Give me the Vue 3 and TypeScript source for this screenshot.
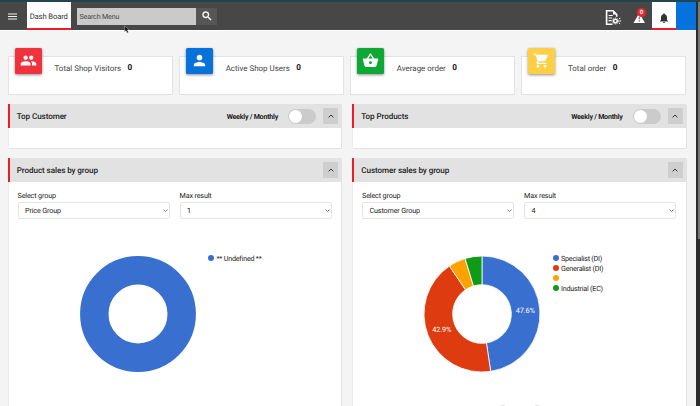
<template>
  <div class="screen">
    <div class="page">
      <header class="topbar">
        <button class="menu-btn" aria-label="menu">
          <svg viewBox="0 0 9 7" width="9" height="7">
            <path d="M0 1h9M0 3.5h9M0 6h9" stroke="#f2f2f2" stroke-width="1.1" />
          </svg>
        </button>
        <div class="tab"><span>Dash Board</span></div>
        <div class="search">
          <span class="search-input">Search Menu</span>
          <span class="search-btn">
            <svg viewBox="0 0 24 24" width="12" height="12">
              <path :d="icons.search" fill="#fff" stroke="#fff" stroke-width="0.8" />
            </svg>
          </span>
        </div>
        <div class="actions">
          <svg class="doc" viewBox="0 0 17 17" width="17" height="17" fill="none" stroke="#fff">
            <path d="M7.5 15.2H1.6V1.8h6.4l3.7 3.7v2.2" stroke-width="1.6" />
            <path d="M8 1.5v4h4z" fill="#fff" stroke="none" />
            <path d="M3.6 6.5h4.2M3.6 9h3.6M3.6 11.6h3" stroke-width="1.2" />
            <circle cx="10.4" cy="12" r="1.8" stroke-width="1.4" />
            <circle cx="10.4" cy="12" r="3" stroke-width="1" stroke-dasharray="1.1 1.1" />
            <path d="M14 9.9l1.4-.8M14.3 12h1.8M13.8 13.9l1.4.9" stroke-width="1" />
          </svg>
          <span class="alert">
            <svg viewBox="0 0 24 24" width="12.5" height="12.5">
              <path :d="icons.warning" fill="#fff" />
            </svg>
            <span class="badge">0</span>
          </span>
          <span class="bell">
            <svg viewBox="0 0 24 24" width="12" height="12">
              <path :d="icons.bell" fill="#333" />
            </svg>
          </span>
          <span class="profile"></span>
        </div>
      </header>

      <main class="content">
        <section class="stats">
          <div v-for="s in stats" :key="s.label" class="stat">
            <span class="stat-icon" :class="s.color">
              <svg viewBox="0 0 24 24" width="17" height="17">
                <path :d="s.icon" fill="#fff" />
              </svg>
            </span>
            <span class="stat-label">{{ s.label }}</span>
            <b class="stat-value">{{ s.value }}</b>
          </div>
        </section>

        <section class="columns">
          <div v-for="col in columns" :key="col.top" class="column">
            <div class="panel">
              <div class="panel-head">
                <h3>{{ col.top }}</h3>
                <span class="period">Weekly / Monthly</span>
                <span class="toggle" :class="{ on: col.monthly }" @click="col.monthly = !col.monthly"><i></i></span>
                <button class="collapse" @click="col.topOpen = !col.topOpen">
                  <svg viewBox="0 0 6 4" width="6" height="4"><path d="M.6 3.4L3 1l2.4 2.4" /></svg>
                </button>
              </div>
              <div v-if="col.topOpen" class="panel-empty"></div>
            </div>

            <div class="panel chart-panel">
              <div class="panel-head">
                <h3>{{ col.title }}</h3>
                <button class="collapse">
                  <svg viewBox="0 0 6 4" width="6" height="4"><path d="M.6 3.4L3 1l2.4 2.4" /></svg>
                </button>
              </div>
              <div class="filters">
                <div v-for="f in col.filters" :key="f.label" class="field">
                  <label>{{ f.label }}</label>
                  <div class="select">
                    <span>{{ f.value }}</span>
                    <svg viewBox="0 0 6 4" width="5" height="3.4"><path d="M.6 .6L3 3l2.4-2.4" /></svg>
                  </div>
                </div>
              </div>
              <div class="chart">
                <svg class="donut" viewBox="-58 -58 116 116" width="116" height="116">
                  <circle v-if="col.slices.length === 1" r="43.7" fill="none" :stroke="col.slices[0].color" stroke-width="28.4" />
                  <template v-else>
                    <path v-for="a in arcs(col.slices)" :key="a.color" :d="a.d" :fill="a.color" stroke="#fff" stroke-width="0.8" />
                    <text v-for="a in arcs(col.slices).filter((x) => x.text)" :key="a.text" :x="a.x" :y="a.y">{{ a.text }}</text>
                  </template>
                </svg>
                <ul class="legend">
                  <li v-for="s in col.slices" :key="s.color">
                    <i :style="{ background: s.color }"></i>{{ s.name }}
                  </li>
                </ul>
              </div>
              <div v-if="col.slices.length > 1" class="pager"><i></i><i></i></div>
            </div>
          </div>
        </section>
      </main>
    </div>
    <div class="scrollbar"><div class="thumb"></div></div>

    <svg class="pointer" viewBox="0 0 7 10" width="6" height="9">
      <path d="M.7 .7v7l1.7-1.5L3.6 9l1.5-.7-1.2-2.6h2.3z" fill="#111" stroke="#ddd" stroke-width="0.5" />
    </svg>
  </div>
</template>

<script lang="ts" setup>
import { reactive } from "vue";

interface Slice {
  name: string;
  value: number;
  color: string;
}

const icons = {
  search:
    "M15.5 14h-.79l-.28-.27A6.47 6.47 0 0 0 16 9.5 6.5 6.5 0 1 0 9.5 16c1.61 0 3.09-.59 4.23-1.57l.27.28v.79l5 4.99L20.49 19l-4.99-5zm-6 0C7.01 14 5 11.99 5 9.5S7.01 5 9.5 5 14 7.01 14 9.5 11.99 14 9.5 14z",
  warning: "M1 21h22L12 2 1 21zm12-3h-2v-2h2v2zm0-4h-2v-4h2v4z",
  bell: "M12 22c1.1 0 2-.9 2-2h-4c0 1.1.9 2 2 2zm6-6v-5c0-3.07-1.64-5.64-4.5-6.32V4c0-.83-.67-1.5-1.5-1.5s-1.5.67-1.5 1.5v.68C7.63 5.36 6 7.92 6 11v5l-2 2v1h16v-1l-2-2z",
  people:
    "M16 11c1.66 0 2.99-1.34 2.99-3S17.66 5 16 5c-1.66 0-3 1.34-3 3s1.34 3 3 3zm-8 0c1.66 0 2.99-1.34 2.99-3S9.66 5 8 5C6.34 5 5 6.34 5 8s1.34 3 3 3zm0 2c-2.33 0-7 1.17-7 3.5V19h14v-2.5c0-2.33-4.67-3.5-7-3.5zm8 0c-.29 0-.62.02-.97.05 1.16.84 1.97 1.97 1.97 3.45V19h6v-2.5c0-2.33-4.67-3.5-7-3.5z",
  person:
    "M12 12c2.21 0 4-1.79 4-4s-1.79-4-4-4-4 1.79-4 4 1.79 4 4 4zm0 2c-2.67 0-8 1.34-8 4v2h16v-2c0-2.66-5.33-4-8-4z",
  basket:
    "M17.21 9l-4.38-6.56c-.19-.28-.51-.42-.83-.42-.32 0-.64.14-.83.43L6.79 9H2c-.55 0-1 .45-1 1 0 .09.01.18.04.27l2.54 9.27c.23.84 1 1.46 1.92 1.46h13c.92 0 1.69-.62 1.93-1.46l2.54-9.27L23 10c0-.55-.45-1-1-1h-4.79zM9 9l3-4.4L15 9H9zm3 8c-1.1 0-2-.9-2-2s.9-2 2-2 2 .9 2 2-.9 2-2 2z",
  cart: "M7 18c-1.1 0-1.99.9-1.99 2S5.9 22 7 22s2-.9 2-2-.9-2-2-2zM1 2v2h2l3.6 7.59-1.35 2.45c-.16.28-.25.61-.25.96 0 1.1.9 2 2 2h12v-2H7.42c-.14 0-.25-.11-.25-.25l.03-.12.9-1.63h7.45c.75 0 1.41-.41 1.75-1.03l3.58-6.49c.08-.14.12-.31.12-.48 0-.55-.45-1-1-1H5.21l-.94-2H1zm16 16c-1.1 0-1.99.9-1.99 2s.89 2 1.99 2 2-.9 2-2-.9-2-2-2z",
};

const stats = [
  { label: "Total Shop Visitors", value: 0, color: "red", icon: icons.people },
  { label: "Active Shop Users", value: 0, color: "blue", icon: icons.person },
  { label: "Average order", value: 0, color: "green", icon: icons.basket },
  { label: "Total order", value: 0, color: "yellow", icon: icons.cart },
];

const columns = reactive([
  {
    top: "Top Customer",
    title: "Product sales by group",
    monthly: false,
    topOpen: true,
    filters: [
      { label: "Select group", value: "Price Group" },
      { label: "Max result", value: "1" },
    ],
    slices: [{ name: "** Undefined **", value: 100, color: "#396fcf" }] as Slice[],
  },
  {
    top: "Top Products",
    title: "Customer sales by group",
    monthly: false,
    topOpen: true,
    filters: [
      { label: "Select group", value: "Customer Group" },
      { label: "Max result", value: "4" },
    ],
    slices: [
      { name: "Specialist (DI)", value: 47.6, color: "#396fcf" },
      { name: "Generalist (DI)", value: 42.9, color: "#de3b10" },
      { name: "", value: 4.8, color: "#ffa200" },
      { name: "Industrial (EC)", value: 4.7, color: "#109a17" },
    ] as Slice[],
  },
]);

// donut slices, clockwise from 12 o'clock
function arcs(slices: Slice[]) {
  const R = 58;
  const r = 29.3;
  const total = slices.reduce((sum, s) => sum + s.value, 0);
  const at = (radius: number, t: number) =>
    [radius * Math.sin(2 * Math.PI * t), -radius * Math.cos(2 * Math.PI * t)].map((n) => +n.toFixed(2));
  let start = 0;
  return slices.map((s) => {
    const end = start + s.value / total;
    const large = end - start > 0.5 ? 1 : 0;
    const d = `M${at(R, start)}A${R} ${R} 0 ${large} 1 ${at(R, end)}L${at(r, end)}A${r} ${r} 0 ${large} 0 ${at(r, start)}Z`;
    const [x, y] = at(43.3, (start + end) / 2);
    start = end;
    return { d, x, y, color: s.color, text: s.value > 10 ? `${s.value}%` : "" };
  });
}
</script>

<style>
body {
  margin: 0;
  overflow: hidden;
}
</style>

<style scoped>
* {
  box-sizing: border-box;
}

.screen {
  display: flex;
  height: 406px;
  overflow: hidden;
  position: relative;
  border-top: 2px solid #25434a;
  font-family: Roboto, "Liberation Sans", sans-serif;
  font-size: 7.2px;
  letter-spacing: -0.14px;
  text-rendering: geometricPrecision;
  color: #222;
}

svg {
  display: block;
  flex: none;
}

button {
  border: 0;
  padding: 0;
  background: none;
}

.page {
  width: 696px;
  background: #f4f4f5;
}

.scrollbar {
  flex: 1;
  background: #2c2c2c;
  padding-left: 2px;
}

.thumb {
  height: 237px;
  background: #777;
}

.topbar {
  display: flex;
  height: 28px;
  background: #474747;
  box-shadow: 0 1px 0 #fff;
}

.menu-btn {
  width: 26.5px;
  display: flex;
  align-items: center;
  padding-left: 8px;
}

.tab {
  width: 44.5px;
  background: #fff;
  border-bottom: 2px solid #ee1c25;
  display: flex;
  align-items: center;
  justify-content: center;
  font-size: 7.7px;
  color: #333;
  white-space: nowrap;
  padding-top: 2px;
}

.search {
  display: flex;
  align-self: center;
  margin-left: 6px;
  height: 17px;
}

.search-input {
  width: 119px;
  background: #cacaca;
  padding-left: 2.5px;
  line-height: 17px;
  font-size: 7.1px;
  color: #444;
}

.search-btn {
  width: 21px;
  background: #565656;
  display: flex;
  align-items: center;
  justify-content: center;
}

.actions {
  display: flex;
  margin-left: auto;
  align-items: center;
}

.doc {
  margin: 2px 11.5px 0 0;
}

.alert {
  position: relative;
  margin: 5px 6.5px 0 0;
}

.badge {
  position: absolute;
  left: 4px;
  top: -4.5px;
  width: 9px;
  height: 9px;
  border-radius: 50%;
  background: #e8262d;
  color: #fff;
  font-size: 6px;
  font-weight: 700;
  line-height: 9px;
  text-align: center;
}

.bell {
  width: 24px;
  height: 28px;
  background: #fff;
  border-bottom: 2px solid #ee1c25;
  display: flex;
  align-items: center;
  justify-content: center;
  padding-top: 5px;
}

.profile {
  width: 20px;
  height: 28px;
  background: #0672de;
}

.content {
  padding: 26px 9.5px 0 7.5px;
}

.stats {
  display: grid;
  grid-template-columns: repeat(4, 165.5px);
  justify-content: space-between;
}

.stat {
  display: flex;
  align-items: flex-start;
  height: 39px;
  background: #fff;
  border: 1px solid #e3e3e3;
  padding-left: 6px;
}

.stat-icon {
  width: 27px;
  height: 26.5px;
  margin-top: -9.5px;
  border-radius: 1.5px;
  box-shadow: 0 1px 3px rgba(0, 0, 0, 0.45);
  display: flex;
  align-items: center;
  justify-content: center;
}

.red {
  background: #f0323c;
}

.blue {
  background: #0872db;
}

.green {
  background: #0ea935;
}

.yellow {
  background: #fdcf47;
}

.stat-label {
  margin-left: 13px;
  line-height: 23px;
  font-size: 7.95px;
  letter-spacing: 0;
  color: #444;
}

.stat-value {
  margin-left: 6.5px;
  line-height: 23px;
  font-size: 8.2px;
  color: #111;
}

.columns {
  display: flex;
  justify-content: space-between;
  margin-top: 9px;
}

.column {
  width: 334.5px;
}

.panel {
  background: #fff;
  border: 1px solid #e2e2e2;
  border-left-color: #ececec;
  border-top: 0;
  border-radius: 2px;
  margin-bottom: 9px;
}

.panel-head {
  display: flex;
  align-items: center;
  height: 24px;
  margin-left: -1px;
  padding: 0 3px 0 7.3px;
  background: #e2e2e2;
  border-left: 2.5px solid #ee1c25;
}

.panel-head h3 {
  margin: 0 auto 0 0;
  font-size: 8.1px;
  font-weight: 500;
  letter-spacing: -0.09px;
  color: #1c1c1c;
}

.period {
  font-size: 7.1px;
  font-weight: 700;
  letter-spacing: -0.24px;
}

.toggle {
  width: 28px;
  height: 15px;
  border-radius: 8px;
  margin: 0 7px 0 10px;
  padding: 1px;
  background: #cbcbcb;
}

.toggle i {
  display: block;
  width: 13px;
  height: 13px;
  border-radius: 50%;
  background: #fff;
}

.toggle.on i {
  margin-left: 13px;
}

.collapse {
  width: 15px;
  height: 16px;
  background: #cecece;
  display: flex;
  align-items: center;
  justify-content: center;
}

.collapse path,
.select path {
  fill: none;
  stroke: #333;
  stroke-width: 1;
}

.panel-empty {
  height: 20px;
}

.chart-panel {
  height: 270px;
}

.filters {
  display: flex;
  gap: 10px;
  padding: 9px 0 0 9px;
}

.field {
  width: 152px;
}

.field label {
  display: block;
  line-height: 9px;
  margin-bottom: 2px;
}

.select {
  display: flex;
  align-items: center;
  justify-content: space-between;
  height: 17px;
  padding: 0 1px 0 6.5px;
  border: 1px solid #e4e4e4;
  border-radius: 2px;
  background: #fff;
}

.select path {
  stroke: #666;
}

.chart {
  display: flex;
  align-items: flex-start;
  padding: 36.5px 0 0 71px;
}

.donut text {
  fill: #fff;
  font-size: 7.3px;
  text-anchor: middle;
  dominant-baseline: central;
}

.legend {
  list-style: none;
  margin: -2.5px 0 0 12.5px;
  padding: 0;
}

.legend li {
  display: flex;
  align-items: center;
  gap: 2.5px;
  height: 10px;
  letter-spacing: -0.23px;
}

.legend i {
  width: 6px;
  height: 6px;
  border-radius: 50%;
}

.pager {
  display: flex;
  gap: 28px;
  padding: 33px 0 0 147px;
}

.pager i {
  width: 6px;
  height: 6px;
  border-radius: 3px;
  background: #ddd;
}

.pointer {
  position: absolute;
  left: 124px;
  top: 23px;
}
</style>
